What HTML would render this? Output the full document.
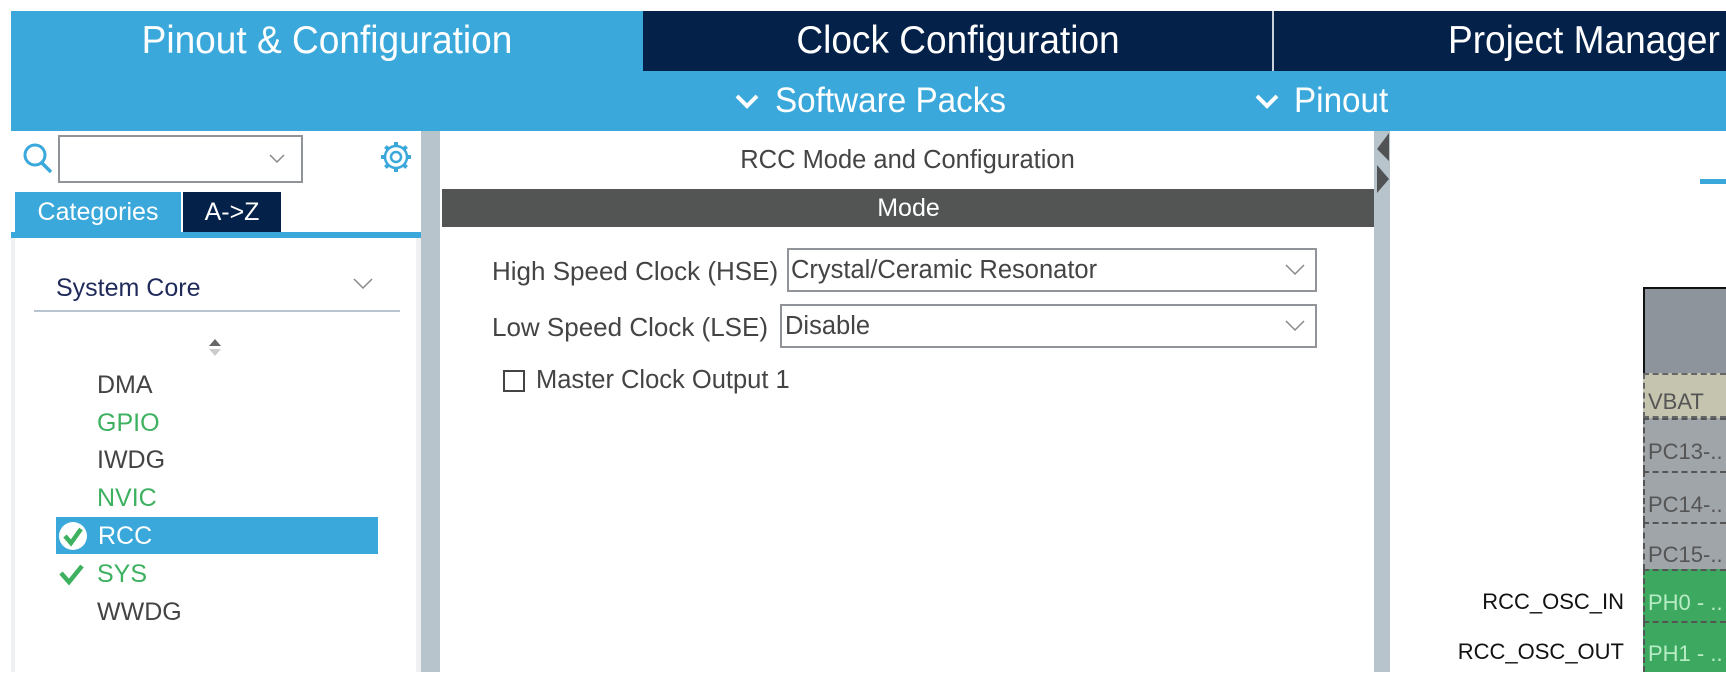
<!DOCTYPE html>
<html><head><meta charset="utf-8"><style>
*{margin:0;padding:0;box-sizing:border-box}
body{width:1726px;height:672px;overflow:hidden;background:#fff;font-family:"Liberation Sans",sans-serif;position:relative}
.a{position:absolute}
.t{white-space:nowrap}
</style></head><body>
<!-- top bar -->
<div class="a" style="left:11px;top:11px;width:1715px;height:60px;background:#04214A"></div>
<div class="a" style="left:11px;top:11px;width:632px;height:60px;background:#3AA8DA"></div>
<div class="a" style="left:1272px;top:11px;width:2px;height:60px;background:#c8d0da"></div>
<div class="a t" style="left:11px;top:11px;width:632px;height:60px;line-height:60px;text-align:center;color:#fff;font-size:39px;transform:scaleX(0.95)">Pinout &amp; Configuration</div>
<div class="a t" style="left:644px;top:11px;width:628px;height:60px;line-height:60px;text-align:center;color:#fff;font-size:39px;transform:scaleX(0.95)">Clock Configuration</div>
<div class="a t" style="left:1448px;top:11px;height:60px;line-height:60px;color:#fff;font-size:39px;transform:scaleX(0.95);transform-origin:left">Project Manager</div>
<!-- second bar -->
<div class="a" style="left:11px;top:71px;width:1715px;height:60px;background:#3AA8DA"></div>
<svg class="a" style="left:734px;top:92px" width="26" height="18"><path d="M3 4 L13 14 L23 4" stroke="#fff" stroke-width="4" fill="none"/></svg>
<div class="a t" style="left:775px;top:71px;height:60px;line-height:60px;color:#fff;font-size:35px;transform:scaleX(0.95);transform-origin:left">Software Packs</div>
<svg class="a" style="left:1254px;top:92px" width="26" height="18"><path d="M3 4 L13 14 L23 4" stroke="#fff" stroke-width="4" fill="none"/></svg>
<div class="a t" style="left:1294px;top:71px;height:60px;line-height:60px;color:#fff;font-size:35px;transform:scaleX(0.95);transform-origin:left">Pinout</div>
<!-- left panel -->
<div class="a" style="left:11px;top:131px;width:410px;height:541px;background:#fff"></div>
<svg class="a" style="left:22px;top:141px" width="32" height="34"><circle cx="13" cy="14" r="10" stroke="#3AA8DA" stroke-width="3" fill="none"/><path d="M20 22 L29 31" stroke="#3AA8DA" stroke-width="3.5"/></svg>
<div class="a" style="left:58px;top:135px;width:245px;height:48px;border:2px solid #909498;background:#fff"></div>
<svg class="a" style="left:268px;top:153px" width="18" height="12"><path d="M2 2 L9 9 L16 2" stroke="#888" stroke-width="1.5" fill="none"/></svg>
<svg class="a" style="left:379px;top:140px" width="34" height="34" viewBox="0 0 34 34"><g stroke="#3AA8DA" fill="none"><circle cx="17" cy="17" r="5" stroke-width="2.5"/><path d="M17 2 L17 7 M17 27 L17 32 M2 17 L7 17 M27 17 L32 17 M6.5 6.5 L10 10 M24 24 L27.5 27.5 M6.5 27.5 L10 24 M24 10 L27.5 6.5" stroke-width="4"/><circle cx="17" cy="17" r="11" stroke-width="2.5"/></g></svg>
<div class="a" style="left:15px;top:192px;width:166px;height:41px;background:#3AA8DA;color:#fff;font-size:25px;line-height:40px;text-align:center">Categories</div>
<div class="a" style="left:183px;top:192px;width:98px;height:41px;background:#04214A;color:#fff;font-size:25px;line-height:40px;text-align:center">A-&gt;Z</div>
<div class="a" style="left:11px;top:232px;width:411px;height:6px;background:#3AA8DA"></div>
<div class="a" style="left:11px;top:238px;width:4px;height:434px;background:#eef0f2"></div>
<div class="a" style="left:416px;top:238px;width:5px;height:434px;background:#eef0f2"></div>
<div class="a t" style="left:56px;top:274px;font-size:25px;color:#1f2a5a">System Core</div>
<svg class="a" style="left:352px;top:277px" width="22" height="14"><path d="M2 2 L11 11 L20 2" stroke="#888" stroke-width="1.5" fill="none"/></svg>
<div class="a" style="left:34px;top:310px;width:366px;height:2px;background:#b8c4d0"></div>
<svg class="a" style="left:206px;top:336px" width="18" height="24"><path d="M3 10 L9 3 L15 10Z" fill="#666"/><path d="M3 13 L9 20 L15 13Z" fill="#ccc"/></svg>
<div class="a" style="left:56px;top:517px;width:322px;height:37px;background:#3AA8DA"></div>
<div class="a t" style="left:97px;top:370px;font-size:25px;color:#444;line-height:30px">DMA</div>
<div class="a t" style="left:97px;top:408px;font-size:25px;color:#3db160;line-height:30px">GPIO</div>
<div class="a t" style="left:97px;top:445px;font-size:25px;color:#444;line-height:30px">IWDG</div>
<div class="a t" style="left:97px;top:483px;font-size:25px;color:#3db160;line-height:30px">NVIC</div>
<div class="a t" style="left:98px;top:521px;font-size:25px;color:#fff;line-height:30px">RCC</div>
<div class="a t" style="left:97px;top:559px;font-size:25px;color:#3db160;line-height:30px">SYS</div>
<div class="a t" style="left:97px;top:597px;font-size:25px;color:#444;line-height:30px">WWDG</div>
<svg class="a" style="left:57px;top:520px" width="32" height="32"><circle cx="16" cy="16" r="14" fill="#fff"/><path d="M8 16 L14 23 L24 9" stroke="#3db160" stroke-width="4.5" fill="none"/></svg>
<svg class="a" style="left:58px;top:562px" width="28" height="24"><path d="M3 11 L11 20 L24 4" stroke="#3db160" stroke-width="4.5" fill="none"/></svg>
<!-- divider -->
<div class="a" style="left:421px;top:131px;width:19px;height:541px;background:#B8C4CB"></div>
<!-- middle -->
<div class="a t" style="left:440px;top:146px;width:935px;text-align:center;font-size:25.5px;color:#444">RCC Mode and Configuration</div>
<div class="a" style="left:442px;top:189px;width:933px;height:38px;background:#535554;color:#fff;font-size:25px;line-height:38px;text-align:center">Mode</div>
<div class="a t" style="left:492px;top:256px;font-size:26px;color:#444">High Speed Clock (HSE)</div>
<div class="a" style="left:787px;top:248px;width:530px;height:44px;border:2px solid #909498"></div>
<div class="a t" style="left:791px;top:256px;font-size:25.5px;color:#444">Crystal/Ceramic Resonator</div>
<svg class="a" style="left:1284px;top:263px" width="22" height="14"><path d="M2 2 L11 11 L20 2" stroke="#888" stroke-width="1.5" fill="none"/></svg>
<div class="a t" style="left:492px;top:312px;font-size:26px;color:#444">Low Speed Clock (LSE)</div>
<div class="a" style="left:780px;top:304px;width:537px;height:44px;border:2px solid #909498"></div>
<div class="a t" style="left:785px;top:312px;font-size:25.5px;color:#444">Disable</div>
<svg class="a" style="left:1284px;top:319px" width="22" height="14"><path d="M2 2 L11 11 L20 2" stroke="#888" stroke-width="1.5" fill="none"/></svg>
<div class="a" style="left:503px;top:370px;width:22px;height:22px;border:2px solid #444"></div>
<div class="a t" style="left:536px;top:366px;font-size:25.5px;color:#444">Master Clock Output 1</div>
<!-- right divider -->
<div class="a" style="left:1374px;top:131px;width:16px;height:541px;background:#B8C4CB"></div>
<svg class="a" style="left:1374px;top:132px" width="16" height="64"><path d="M15 1 L3 17 L15 29Z" fill="#505254"/><path d="M3 33 L15 47 L3 61Z" fill="#505254"/></svg>
<div class="a" style="left:1700px;top:179px;width:26px;height:5px;background:#3AA8DA"></div>
<!-- chip -->
<div class="a" style="left:1643px;top:287px;width:83px;height:86px;background:#8E949B;border-left:2px solid #111;border-top:2px solid #111"></div>
<div class="a t" style="left:1643px;top:373px;width:83px;height:45px;background:#C5C4AF;border:2px dashed #666;border-right:none;font-size:22px;color:#555;line-height:54px;padding-left:3px">VBAT</div>
<div class="a t" style="left:1643px;top:418px;width:83px;height:53px;background:#A0A5AA;border:2px dashed #555;border-right:none;border-bottom:none;font-size:22px;color:#555;line-height:64px;padding-left:3px">PC13-..</div>
<div class="a t" style="left:1643px;top:471px;width:83px;height:51px;background:#A0A5AA;border:2px dashed #555;border-right:none;border-bottom:none;font-size:22px;color:#555;line-height:64px;padding-left:3px">PC14-..</div>
<div class="a t" style="left:1643px;top:522px;width:83px;height:48px;background:#A0A5AA;border:2px dashed #555;border-right:none;border-bottom:none;font-size:22px;color:#555;line-height:62px;padding-left:3px">PC15-..</div>
<div class="a t" style="left:1643px;top:569px;width:83px;height:52px;background:#3DA860;border:2px dashed #555;border-right:none;border-bottom:none;font-size:22px;color:#b8ecc4;line-height:64px;padding-left:3px">PH0 - ..</div>
<div class="a t" style="left:1643px;top:621px;width:83px;height:51px;background:#3DA860;border:2px dashed #555;border-right:none;border-bottom:none;font-size:22px;color:#b8ecc4;line-height:62px;padding-left:3px">PH1 - ..</div>
<div class="a t" style="left:1424px;top:589px;width:200px;text-align:right;font-size:22px;color:#111">RCC_OSC_IN</div>
<div class="a t" style="left:1424px;top:639px;width:200px;text-align:right;font-size:22px;color:#111">RCC_OSC_OUT</div>
</body></html>
